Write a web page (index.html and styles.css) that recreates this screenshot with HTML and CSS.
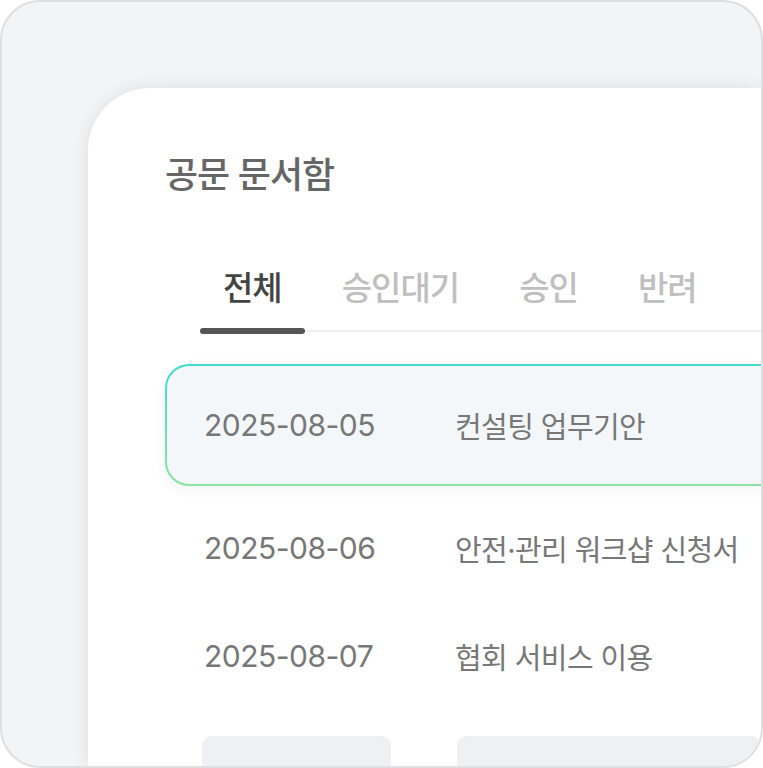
FILE: index.html
```html
<!DOCTYPE html>
<html lang="ko">
<head>
    <meta charset="UTF-8">
    <meta name="viewport" content="width=device-width, initial-scale=1.0">
    <title>공문 문서함</title>
    <link rel="stylesheet" href="styles.css">
</head>
<body>
    <div class="frame">
        <main class="card">
            <h1>공문 문서함</h1>

            <nav class="tabs">
                <span class="tab active">전체</span>
                <span class="tab">승인대기</span>
                <span class="tab">승인</span>
                <span class="tab">반려</span>
            </nav>

            <ul class="docs">
                <li class="doc selected">
                    <span class="date">2025-08-05</span>
                    <span class="name">컨설팅 업무기안</span>
                </li>
                <li class="doc">
                    <span class="date">2025-08-06</span>
                    <span class="name">안전·관리 워크샵 신청서</span>
                </li>
                <li class="doc">
                    <span class="date">2025-08-07</span>
                    <span class="name">협회 서비스 이용</span>
                </li>
            </ul>

            <div class="actions">
                <span class="btn short"></span>
                <span class="btn wide"></span>
            </div>
        </main>
    </div>
</body>
</html>
```

FILE: styles.css
```css
html, body {
    margin: 0;
    padding: 0;
    background: #ffffff;
}
body {
    font-family: "Inter", "Noto Sans CJK KR", sans-serif;
    color: #777777;
}
.frame {
    width: 763px;
    height: 768px;
    box-sizing: border-box;
    border: 2px solid #dedfe1;
    border-radius: 40px;
    background: #f3f4f6;
    overflow: hidden;
    padding: 86px 0 0 86px;
    display: flex;
}
.card {
    flex: 1;
    background: #ffffff;
    border-top-left-radius: 62px;
    box-shadow: 0 0 18px rgba(0, 0, 0, .09);
    padding: 63px 0 0 77px;
}

h1 {
    margin: 0;
    font-size: 36px;
    font-weight: 500;
    color: #666666;
    letter-spacing: -1px;
    line-height: 48px;
}

.tabs {
    display: flex;
    gap: 14px;
    margin: 68px 0 0 35px;
    border-bottom: 2px solid #efefef;
}
.tab {
    font-size: 33px;
    font-weight: 500;
    color: #bfbfbf;
    letter-spacing: -1px;
    padding: 0 23px 21px;
    line-height: 42px;
    position: relative;
}
.tab.active {
    color: #444444;
}
.tab.active::after {
    content: "";
    position: absolute;
    left: 0;
    right: 0;
    bottom: -4px;
    height: 6px;
    border-radius: 3px;
    background: #555555;
}

.docs {
    list-style: none;
    margin: 32px 0 0;
    padding: 0;
}
.doc {
    display: flex;
    align-items: center;
    height: 108px;
    padding-left: 39px;
    font-size: 29px;
    letter-spacing: -.6px;
}
.doc.selected {
    height: 122px;
    margin-bottom: 8px;
    padding-left: 37px;
    border: 2px solid transparent;
    border-right: 0;
    border-radius: 24px 0 0 24px;
    background:
        linear-gradient(#f4f7f9, #f4f7f9) padding-box,
        linear-gradient(#3fdccf, #8be3a0) border-box;
    box-shadow: 0 4px 14px rgba(0, 0, 0, .05);
    box-sizing: border-box;
}
.date {
    width: 251px;
    flex: none;
    font-size: 30px;
    letter-spacing: -.5px;
}

.actions {
    display: flex;
    gap: 66px;
    margin: 26px 0 0 37px;
}
.btn {
    height: 40px;
    border-radius: 10px;
    background: #eef0f3;
}
.btn.short {
    width: 189px;
}
.btn.wide {
    flex: 1;
}
```
